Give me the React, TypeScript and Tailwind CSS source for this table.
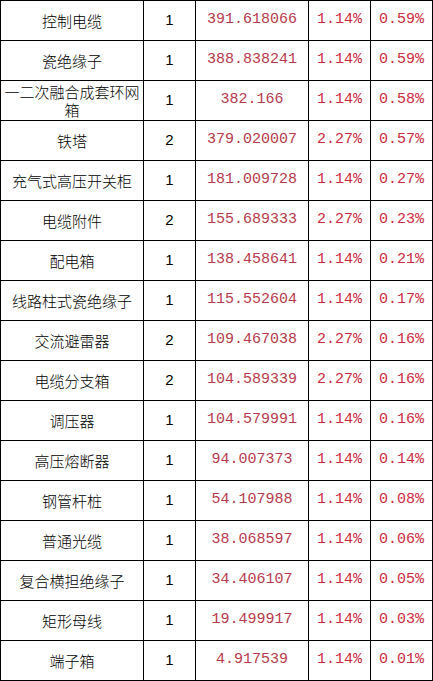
import React from "react";

interface Row {
  name: string;
  count: number;
  amount: string;
  countPct: string;
  amountPct: string;
}

const rows: Row[] = [
  { name: "控制电缆", count: 1, amount: "391.618066", countPct: "1.14%", amountPct: "0.59%" },
  { name: "瓷绝缘子", count: 1, amount: "388.838241", countPct: "1.14%", amountPct: "0.59%" },
  { name: "一二次融合成套环网箱", count: 1, amount: "382.166", countPct: "1.14%", amountPct: "0.58%" },
  { name: "铁塔", count: 2, amount: "379.020007", countPct: "2.27%", amountPct: "0.57%" },
  { name: "充气式高压开关柜", count: 1, amount: "181.009728", countPct: "1.14%", amountPct: "0.27%" },
  { name: "电缆附件", count: 2, amount: "155.689333", countPct: "2.27%", amountPct: "0.23%" },
  { name: "配电箱", count: 1, amount: "138.458641", countPct: "1.14%", amountPct: "0.21%" },
  { name: "线路柱式瓷绝缘子", count: 1, amount: "115.552604", countPct: "1.14%", amountPct: "0.17%" },
  { name: "交流避雷器", count: 2, amount: "109.467038", countPct: "2.27%", amountPct: "0.16%" },
  { name: "电缆分支箱", count: 2, amount: "104.589339", countPct: "2.27%", amountPct: "0.16%" },
  { name: "调压器", count: 1, amount: "104.579991", countPct: "1.14%", amountPct: "0.16%" },
  { name: "高压熔断器", count: 1, amount: "94.007373", countPct: "1.14%", amountPct: "0.14%" },
  { name: "钢管杆桩", count: 1, amount: "54.107988", countPct: "1.14%", amountPct: "0.08%" },
  { name: "普通光缆", count: 1, amount: "38.068597", countPct: "1.14%", amountPct: "0.06%" },
  { name: "复合横担绝缘子", count: 1, amount: "34.406107", countPct: "1.14%", amountPct: "0.05%" },
  { name: "矩形母线", count: 1, amount: "19.499917", countPct: "1.14%", amountPct: "0.03%" },
  { name: "端子箱", count: 1, amount: "4.917539", countPct: "1.14%", amountPct: "0.01%" },
];

const cell = "flex items-center justify-center text-center border-r border-black";

export default function App() {
  return (
    <div className="w-[433px] bg-white border-l border-t border-black font-['Noto_Sans_CJK_SC',sans-serif] text-[15px] text-black">
      {rows.map((r) => (
        <div key={r.name} className="flex h-[40px] border-b border-black">
          <div className={`${cell} w-[143px] px-[3px] leading-[18px] font-light`}>{r.name}</div>
          <div className={`${cell} w-[52px] font-['Liberation_Sans',sans-serif]`}>{r.count}</div>
          <div className={`${cell} w-[113px] font-['Liberation_Mono',monospace] text-[#b83a4e]`}>{r.amount}</div>
          <div className={`${cell} w-[62px] font-['Liberation_Mono',monospace] text-[#cc2a42]`}>{r.countPct}</div>
          <div className={`${cell} w-[62px] font-['Liberation_Mono',monospace] text-[#cc2a42]`}>{r.amountPct}</div>
        </div>
      ))}
    </div>
  );
}
